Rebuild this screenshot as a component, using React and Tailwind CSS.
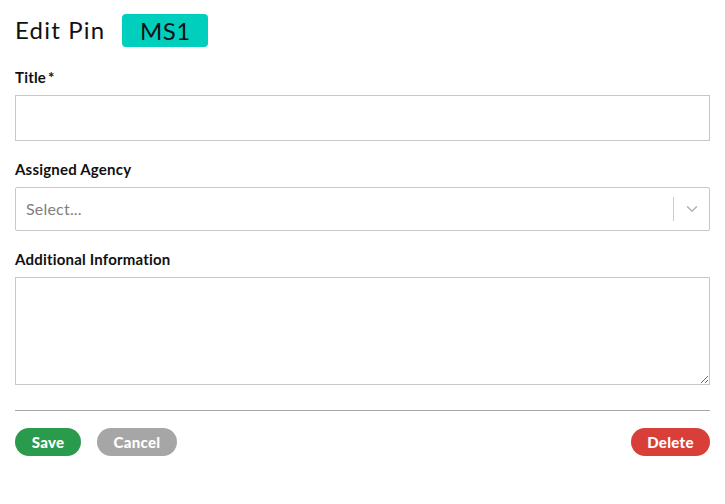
import { ChevronDown } from "lucide-react";

function Label({ children }) {
  return (
    <label className="block text-[15px] font-bold text-[#111] leading-[17px] tracking-[0.2px] mb-[9px]">
      {children}
    </label>
  );
}

export default function App() {
  return (
    <div className="bg-white min-h-[504px] px-[15px] pt-[14px] font-['Lato',sans-serif]">
      <div className="flex items-center gap-[17px] h-[33px]">
        <h1 className="text-[24px] leading-none tracking-[1.2px] text-[#111] -mt-[2px]">Edit Pin</h1>
        <span className="bg-[#00cfbd] rounded-[4px] w-[86px] h-[33px] flex items-center justify-center text-[24px] tracking-[0.5px] text-[#111]">
          MS1
        </span>
      </div>

      <div className="mt-[22px]">
        <Label>
          Title<span className="ml-[2px]">*</span>
        </Label>
        <input className="block w-full h-[46px] border border-[#c8c8c8] outline-none px-[10px]" />
      </div>

      <div className="mt-[20px]">
        <Label>Assigned Agency</Label>
        <div className="flex items-center h-[44px] border border-[#c8c8c8] rounded-[2px]">
          <span className="flex-1 px-[10px] text-[16px] tracking-[0.2px] text-[#808080]">Select...</span>
          <span className="w-px h-[24px] bg-[#cccccc]" />
          <span className="w-[35px] flex justify-center text-[#b3b3b3]">
            <ChevronDown size={18} strokeWidth={2} />
          </span>
        </div>
      </div>

      <div className="mt-[20px]">
        <Label>Additional Information</Label>
        <textarea className="block w-full h-[108px] border border-[#c8c8c8] outline-none p-[10px]" />
      </div>

      <hr className="mt-[25px] border-0 border-t border-[#a9a9a9]" />

      <div className="flex items-center mt-[17px]">
        <button className="h-[28px] w-[66px] rounded-full bg-[#2a9b4c] text-white text-[15px] font-black tracking-[0.3px]">Save</button>
        <button className="ml-[16px] h-[28px] w-[80px] rounded-full bg-[#a6a6a6] text-white text-[15px] font-black tracking-[0.3px]">Cancel</button>
        <button className="ml-auto h-[28px] w-[79px] rounded-full bg-[#d93f39] text-white text-[15px] font-black tracking-[0.3px]">Delete</button>
      </div>
    </div>
  );
}
